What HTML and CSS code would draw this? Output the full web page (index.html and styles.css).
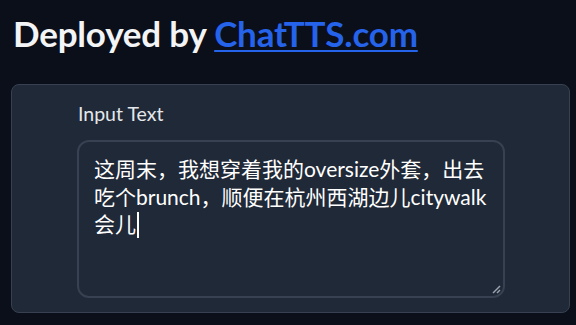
FILE: index.html
```html
<!DOCTYPE html>
<html lang="zh-CN">
<head>
<meta charset="utf-8">
<title>ChatTTS</title>
<link rel="stylesheet" href="styles.css">
</head>
<body>
<main class="page">
  <h1 class="title">Deployed by <a class="title-link" href="#">ChatTTS.com</a></h1>
  <section class="panel">
    <label class="label">Input Text</label>
    <div class="textbox" role="textbox" aria-multiline="true">这周末，我想穿着我的oversize外套，出去吃个brunch，顺便在杭州西湖边儿citywalk会儿<span class="caret"></span>
      <svg class="grip" width="10" height="10" viewBox="0 0 10 10" aria-hidden="true">
        <line x1="9" y1="2" x2="2" y2="9" stroke="#9ca3af" stroke-width="1.4"/>
        <line x1="9" y1="6" x2="6" y2="9" stroke="#9ca3af" stroke-width="1.4"/>
      </svg>
    </div>
  </section>
</main>
</body>
</html>
```
FILE: styles.css
```css
html, body {
  margin: 0;
  padding: 0;
  background: #0b0f19;
}
body {
  font-family: "Lato", "Noto Sans CJK SC", sans-serif;
  color: #f3f4f6;
}
.page {
  padding: 9px 6px 0 11px;
}
.title {
  margin: 0 0 0 2px;
  font-size: 35px;
  font-weight: 700;
  line-height: 48px;
  color: #f3f4f6;
  height: 64px;
  letter-spacing: -0.2px;
}
.title-link {
  color: #2563eb;
  text-decoration: underline;
  text-decoration-thickness: 2px;
  text-underline-offset: 3px;
}
.panel {
  margin-top: 11px;
  background: #1f2937;
  border: 1px solid #374151;
  border-radius: 8px;
  padding: 17px 64px 14px 65px;
  display: flex;
  flex-direction: column;
  height: 229px;
  box-sizing: border-box;
}
.label {
  font-size: 19.5px;
  line-height: 24px;
  color: #e5e7eb;
  margin: 0 0 14px 1px;
}
.textbox {
  position: relative;
  width: 428px;
  height: 158px;
  box-sizing: border-box;
  border: 2px solid #374151;
  border-radius: 12px;
  background: #1f2937;
  padding: 13px 15px;
  font-size: 21px;
  line-height: 27.5px;
  color: #ffffff;
}
.caret {
  display: inline-block;
  width: 2px;
  height: 26px;
  background: #ffffff;
  vertical-align: -6px;
  margin-left: 1px;
}
.grip {
  position: absolute;
  right: 2px;
  bottom: 2px;
}
```
